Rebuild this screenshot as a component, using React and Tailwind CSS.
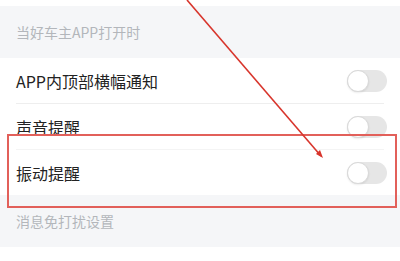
import React from 'react';

const Toggle = () => (
  <div className="relative w-[40px] h-[22px] rounded-full bg-[#e6e6e6]">
    <div className="absolute left-0 top-0 w-[22px] h-[22px] rounded-full bg-white border border-[#d9d9d9] shadow-[0_1px_2px_rgba(0,0,0,0.08)]" />
  </div>
);

const Row = ({ label, divider, h }) => (
  <div className={`bg-white ${h} flex flex-col`}>
    <div className="flex-1 flex items-center justify-between pl-4 pr-[13px]">
      <span className="text-[16px] text-[#222222]">{label}</span>
      <Toggle />
    </div>
    {divider && <div className={`mx-4 h-px ${divider}`} />}
  </div>
);

const App = () => {
  return (
    <div
      className="relative w-[400px] h-[261px] bg-white overflow-hidden"
      style={{ fontFamily: '"Noto Sans CJK SC", "Noto Sans", sans-serif' }}
    >
      <div className="h-[6px] bg-white" />

      {/* section header */}
      <div className="h-[52px] bg-[#f5f6f8] flex items-center px-4">
        <span className="text-[14px] text-[#b3b6bb]">当好车主APP打开时</span>
      </div>

      <Row label="APP内顶部横幅通知" divider="bg-[#eeeeee]" h="h-[46px]" />
      <Row label="声音提醒" divider="bg-[#f4f4f4]" h="h-[46px]" />
      <Row label="振动提醒" h="h-[45px]" />

      <div className="h-[52px] bg-[#f5f6f8] flex items-center px-4">
        <span className="text-[14px] text-[#b3b6bb]">消息免打扰设置</span>
      </div>

      {/* highlight box */}
      <div className="absolute left-[7px] top-[134px] w-[390px] h-[74px] border-2 border-[#e2605a]" />

      {/* arrow */}
      <svg className="absolute inset-0 pointer-events-none" width="400" height="261" viewBox="0 0 400 261">
        <line x1="187" y1="0" x2="321" y2="156" stroke="#d8352c" strokeWidth="1.6" />
        <polygon points="323,158 316,154 320,150" fill="#d8352c" />
      </svg>
    </div>
  );
};

export default App;
